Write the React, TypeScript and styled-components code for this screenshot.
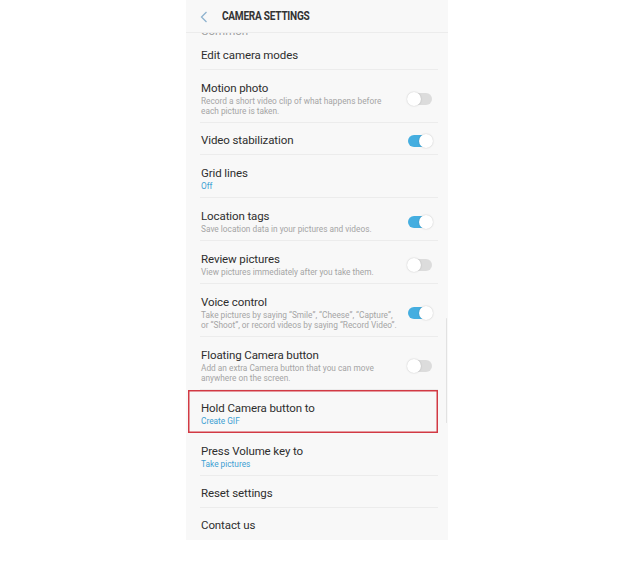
import React from "react";
import styled, { createGlobalStyle } from "styled-components";

const Global = createGlobalStyle`
  html, body { margin: 0; padding: 0; background: #ffffff; }
  body { font-family: Roboto, "Noto Sans", sans-serif; -webkit-font-smoothing: antialiased; }
`;

const Page = styled.div`
  width: 639px;
  height: 564px;
  display: flex;
  align-items: flex-start;
  padding-left: 186px;
  box-sizing: border-box;
`;

const Panel = styled.div`
  position: relative;
  width: 262px;
  background: #f8f8f8;
  display: flex;
  flex-direction: column;
`;

const Header = styled.div`
  height: 33px;
  display: flex;
  align-items: center;
  padding-left: 14px;
  box-sizing: border-box;
  border-bottom: 1px solid #ececec;
`;

const Back = styled.svg`
  width: 8px;
  height: 12px;
  margin-right: 14px;
  margin-top: 1px;
`;

const HeaderTitle = styled.div`
  font-family: Roboto, sans-serif;
  font-weight: 700;
  font-size: 12px;
  color: #333;
  letter-spacing: -0.3px;
  transform: scaleX(0.84);
  transform-origin: left center;
  white-space: nowrap;
`;

const ClipStrip = styled.div`
  height: 5px;
  overflow: hidden;
  padding-left: 15px;
`;

const ClipText = styled.div`
  font-size: 11.5px;
  line-height: 15px;
  margin-top: -9px;
  color: #a0a0a0;
`;

const Row = styled.div<{ $last?: boolean; $multi?: boolean; $highlight?: boolean }>`
  position: relative;
  display: flex;
  align-items: center;
  box-sizing: border-box;
  min-height: ${(p) => (p.$multi ? "43px" : "32px")};
  padding: ${(p) => (p.$multi ? "11px 16px 7px 15px" : "10px 16px 7px 15px")};
  &::after {
    content: "";
    display: ${(p) => (p.$last || p.$highlight ? "none" : "block")};
    position: absolute;
    left: 14px;
    right: 10px;
    bottom: 0;
    height: 1px;
    background: #ececec;
  }
  ${(p) =>
    p.$highlight
      ? `box-shadow: inset 0 0 0 1.5px #d23a44; margin: 0 10px 0 2px; padding-left: 13px;`
      : ""}
`;

const TextCol = styled.div`
  flex: 1;
  display: flex;
  flex-direction: column;
  min-width: 0;
`;

const Title = styled.div`
  font-size: 11.5px;
  letter-spacing: -0.1px;
  line-height: 15px;
  color: #2e2e2e;
  white-space: nowrap;
`;

const Sub = styled.div`
  font-size: 8.3px;
  line-height: 10px;
  color: #a5a5a5;
  padding-right: 3px;
`;

const Value = styled.div`
  font-size: 8.3px;
  line-height: 10px;
  color: #3d9fd3;
`;

const Track = styled.div<{ $on: boolean }>`
  position: relative;
  flex: none;
  width: 24px;
  height: 12px;
  border-radius: 6px;
  background: ${(p) => (p.$on ? "#45aee0" : "#dcdcdc")};
  margin-left: 6px;
`;

const Thumb = styled.div<{ $on: boolean }>`
  position: absolute;
  top: -1px;
  ${(p) => (p.$on ? "right: -1px;" : "left: -1px;")}
  width: 14px;
  height: 14px;
  border-radius: 50%;
  background: #fff;
  box-shadow: 0 0 1.5px rgba(0, 0, 0, 0.25);
`;

const Scrollbar = styled.div`
  position: absolute;
  right: 1px;
  top: 318px;
  width: 1.5px;
  height: 105px;
  background: #e2e2e2;
  border-radius: 1px;
`;

type Item = {
  title: string;
  sub?: string;
  value?: string;
  toggle?: boolean;
  highlight?: boolean;
};

const items: Item[] = [
  { title: "Edit camera modes" },
  {
    title: "Motion photo",
    sub: "Record a short video clip of what happens before each picture is taken.",
    toggle: false,
  },
  { title: "Video stabilization", toggle: true },
  { title: "Grid lines", value: "Off" },
  { title: "Location tags", sub: "Save location data in your pictures and videos.", toggle: true },
  { title: "Review pictures", sub: "View pictures immediately after you take them.", toggle: false },
  {
    title: "Voice control",
    sub: "Take pictures by saying \u201CSmile\u201D, \u201CCheese\u201D, \u201CCapture\u201D, or \u201CShoot\u201D, or record videos by saying \u201CRecord Video\u201D.",
    toggle: true,
  },
  {
    title: "Floating Camera button",
    sub: "Add an extra Camera button that you can move anywhere on the screen.",
    toggle: false,
  },
  { title: "Hold Camera button to", value: "Create GIF", highlight: true },
  { title: "Press Volume key to", value: "Take pictures" },
  { title: "Reset settings" },
  { title: "Contact us" },
];

export default function App() {
  return (
    <>
      <Global />
      <Page>
        <Panel>
          <Header>
            <Back viewBox="0 0 8 12">
              <path d="M6.5 1 L1.5 6 L6.5 11" fill="none" stroke="#8fb3cf" strokeWidth="1.3" />
            </Back>
            <HeaderTitle>CAMERA SETTINGS</HeaderTitle>
          </Header>
          <ClipStrip>
            <ClipText>Common</ClipText>
          </ClipStrip>
          {items.map((it, i) => (
            <Row
              key={it.title}
              $multi={!!(it.sub || it.value)}
              $last={i === items.length - 1}
              $highlight={it.highlight}
            >
              <TextCol>
                <Title>{it.title}</Title>
                {it.sub && <Sub>{it.sub}</Sub>}
                {it.value && <Value>{it.value}</Value>}
              </TextCol>
              {it.toggle !== undefined && (
                <Track $on={it.toggle}>
                  <Thumb $on={it.toggle} />
                </Track>
              )}
            </Row>
          ))}
          <Scrollbar />
        </Panel>
      </Page>
    </>
  );
}
